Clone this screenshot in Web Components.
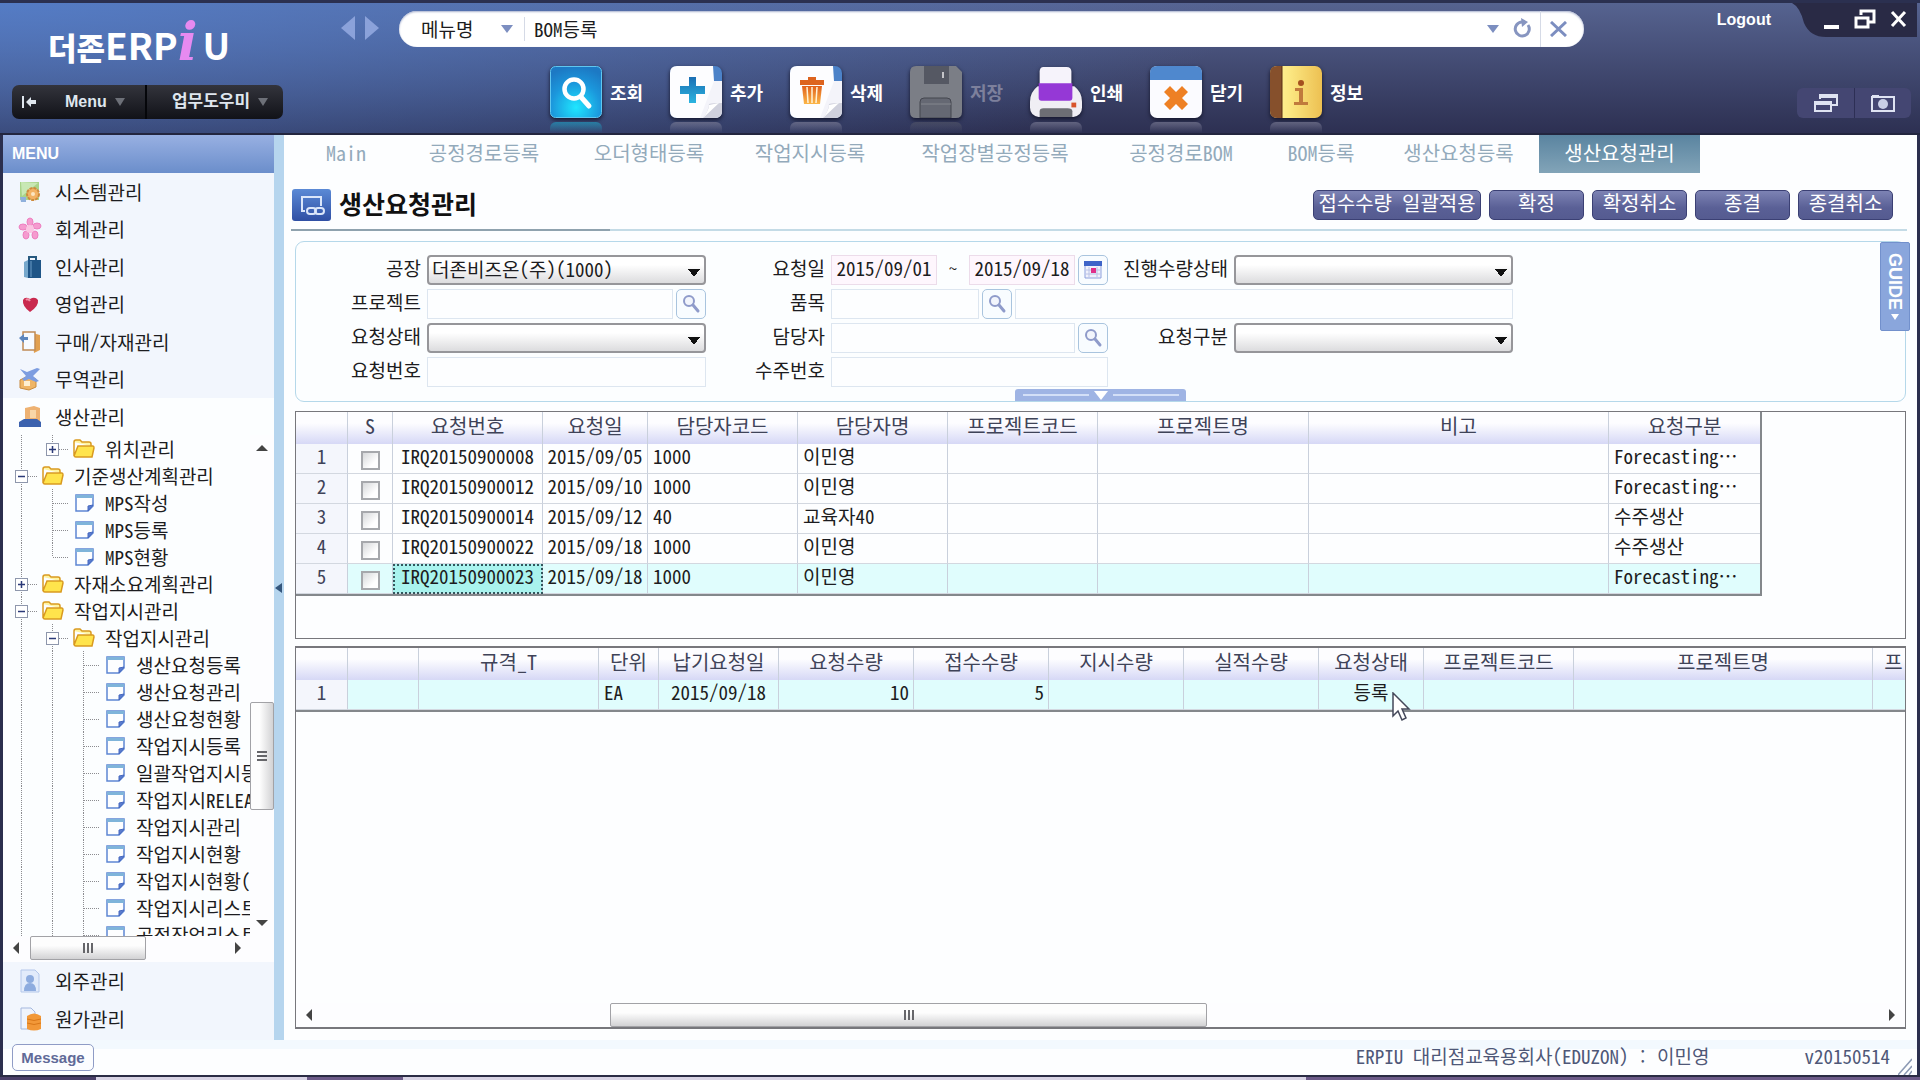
<!DOCTYPE html>
<html lang="ko">
<head>
<meta charset="utf-8">
<title>ERP iU</title>
<style>
  html, body {
    margin: 0;
    height: 100%;
  }

  body {
    --ui: "Noto Sans Mono CJK KR", "Noto Sans CJK KR", sans-serif;
    --bold: "Liberation Sans", "Noto Sans CJK KR", sans-serif;
    font: 19px/24px var(--ui);
    color: #1c1c20;
    background: #2b2f4e;
    overflow: hidden;
  }
</style>
</head>
<body>
<erp-window>
  <app-header slot="header"></app-header>
  <side-menu slot="side"></side-menu>
  <doc-tabs slot="main"></doc-tabs>
  <page-title slot="main" heading="생산요청관리">
    <action-button class="wide">접수수량 일괄적용</action-button>
    <action-button>확정</action-button>
    <action-button>확정취소</action-button>
    <action-button>종결</action-button>
    <action-button>종결취소</action-button>
  </page-title>
  <search-panel slot="main"></search-panel>
  <data-grid slot="main" source="requests"></data-grid>
  <data-grid slot="main" source="items" class="fill"></data-grid>
  <status-bar slot="footer"></status-bar>
</erp-window>

<script>
/**
 * Shared svg drawings
 */
const ICONS = {
  search: `<svg viewBox="0 0 52 52"><defs><radialGradient id="g" cx=".5" cy=".8" r=".8"><stop offset="0" stop-color="#1fe6ff"/><stop offset=".6" stop-color="#1b97dc"/><stop offset="1" stop-color="#1c79c4"/></radialGradient></defs><rect x=".5" y=".5" width="51" height="51" rx="5" fill="url(#g)" stroke="#5fc6f0"/><circle cx="24" cy="23" r="9.500" fill="none" stroke="#fff" stroke-width="4.500"/><path d="M31 31l8 9" stroke="#fff" stroke-width="5" stroke-linecap="round"/></svg>`,
  add: `<svg viewBox="0 0 52 52"><defs><linearGradient id="g" x2="0" y2="1"><stop offset="0" stop-color="#1b6fb4"/><stop offset="1" stop-color="#2bb4e0"/></linearGradient></defs><rect width="52" height="52" rx="7" fill="#4c82c8"/><path d="M7 0h36l1 15v13l8-4v14L36 52H7q-7 0-7-7V7q0-7 7-7z" fill="#fdfdff"/><path d="M44 15h8v30q0 7-7 7H30z" fill="#f4f4fa"/><path d="M33 52q6-8 6-14 4-1 13-1v8q0 7-7 7z" fill="#cfd0dc"/><path d="M33 52q6-8 6-13 5-1 10-2z" fill="#fff"/><path d="M19 11h7v9h9v8h-9v9h-7v-9h-9v-8h9z" fill="url(#g)"/></svg>`,
  remove: `<svg viewBox="0 0 52 52"><defs><linearGradient id="g" x2="0" y2="1"><stop offset="0" stop-color="#e0601c"/><stop offset="1" stop-color="#fbb648"/></linearGradient></defs><rect width="52" height="52" rx="7" fill="#4c82c8"/><path d="M7 0h36l1 15v13l8-4v14L36 52H7q-7 0-7-7V7q0-7 7-7z" fill="#fdfdff"/><path d="M44 15h8v30q0 7-7 7H30z" fill="#f4f4fa"/><path d="M33 52q6-8 6-14 4-1 13-1v8q0 7-7 7z" fill="#cfd0dc"/><path d="M33 52q6-8 6-13 5-1 10-2z" fill="#fff"/><path d="M10 14h8v-3h8v3h8v5H10z" fill="#dd641f"/><path d="M12 20h20l-2 18H14z" fill="url(#g)"/><path d="M17 21l1 16M22 21v16M27 21l-1 16" stroke="#fff3d8" stroke-width="1.500"/></svg>`,
  save: `<svg viewBox="0 0 52 52"><path d="M6 0h40l6 6v40q0 6-6 6H6q-6 0-6-6V6q0-6 6-6z" fill="#7b7e86"/><path d="M14 0h25v18H14z" fill="#555863"/><path d="M33 6v6" stroke="#c4c4c8" stroke-width="2"/><path d="M10 52V36q0-4 4-4h23q4 0 4 4v16z" fill="#656873" stroke="#44464f"/><path d="M11 38h30" stroke="#85878f"/></svg>`,
  print: `<svg viewBox="0 0 54 52"><path d="M14 0h24q5 0 5 5v16H10V5q0-5 4-5z" fill="#f6f3fb"/><path d="M8 20h38q8 6 8 16v6q0 8-9 10H9q-9-2-9-10v-6q0-10 8-16z" fill="#f0eef4"/><path d="M9 17h35v15q0 3-3 3H12q-3 0-3-3z" fill="#9538d6"/><path d="M10 52v-6q0-3 4-3h25q5 0 5 3v6z" fill="#6d6e74"/><path d="M43 37h5v5h-5z" fill="#d8542c"/></svg>`,
  close: `<svg viewBox="0 0 52 52"><rect width="52" height="52" rx="7" fill="#fbfbff"/><path d="M7 0h38q7 0 7 7v7H0V7q0-7 7-7z" fill="#4f88ce"/><path d="M20 20l6 6 6-6 6 6-6 6 6 6-6 6-6-6-6 6-6-6 6-6-6-6z" fill="#ee8024"/></svg>`,
  info: `<svg viewBox="0 0 52 52"><defs><linearGradient id="g" x2="1" y2="0"><stop offset="0" stop-color="#fff7a0"/><stop offset=".4" stop-color="#fbe680"/><stop offset="1" stop-color="#edc052"/></linearGradient></defs><rect width="52" height="52" rx="7" fill="url(#g)"/><path d="M7 0h5v52H7q-7 0-7-7V7q0-7 7-7z" fill="#86502c"/><path d="M12 0v52" stroke="#5b2f14"/><circle cx="31" cy="17" r="3" fill="#a4501f"/><path d="M25 22h8v14h5v3H24v-3h5V25h-4z" fill="#c07a3c"/></svg>`,
  lens: `<svg viewBox="0 0 20 20" width="20" height="20"><circle cx="8" cy="7" r="5" fill="#f2f5fc" stroke="#8f9bca" stroke-width="2"/><path d="M12 11l5 6" stroke="#8f9bca" stroke-width="3" stroke-linecap="round"/></svg>`,
  calendar: `<svg viewBox="0 0 20 20" width="20" height="20"><path d="M2 2h16v16H2z" fill="#f0f1fb" stroke="#8da0dc"/><path d="M1 1h18v5H1z" fill="#3e64c8"/><path d="M6 7v10M14 7v10M3 10h14M3 14h14" stroke="#b9c2e6"/><path d="M8 8h5v5H8z" fill="#e0308a"/></svg>`,
  folder: `<svg viewBox="0 0 22 20" width="22" height="20"><path d="M1 3q0-2 2-2h4l2 2h7q2 0 2 2v2" fill="#fff3a0" stroke="#d99a20" stroke-width="1.500"/><path d="M1 3v14l4-10h15q1 0 1 2l-2 9H3q-2 0-2-2z" fill="#ffe44c" stroke="#d99a20" stroke-width="1.500"/></svg>`,
  doc: `<svg viewBox="0 0 22 20" width="22" height="20"><path d="M3 2h17v11l-5 5H3z" fill="#fdfeff" stroke="#5d86d4" stroke-width="1.500"/><path d="M3 2h17v3H3z" fill="#7fb4da"/><path d="M20 12l-5 6v-5z" fill="#5d7fd0" stroke="#4668c0"/></svg>`,
  system: `<svg viewBox="0 0 24 24"><path d="M2 2h19v18H2z" fill="#a9d48a"/><path d="M2 17h6v5H3z" fill="#8fb0dc"/><path d="M3 2l1 14 16-13z" fill="#c8e8b4"/><circle cx="15" cy="14" r="6" fill="#f2b264" stroke="#cf8a3c" stroke-width="2" stroke-dasharray="3 1"/><circle cx="15" cy="14" r="2" fill="#fbe6c2"/></svg>`,
  account: `<svg viewBox="0 0 24 24"><g fill="#f59bcf" stroke="#ee7fc0"><ellipse cx="12" cy="5" rx="3" ry="4"/><ellipse cx="5" cy="10" rx="4" ry="3"/><ellipse cx="19" cy="9" rx="4" ry="3"/><ellipse cx="8" cy="18" rx="3" ry="4"/><ellipse cx="17" cy="18" rx="3" ry="4"/></g><circle cx="12" cy="12" r="4" fill="#fbc4e2"/></svg>`,
  hr: `<svg viewBox="0 0 24 24"><path d="M11 5V2h7v3" fill="none" stroke="#27597f" stroke-width="2"/><path d="M6 7l4-2v18l-4-1z" fill="#77a8cc"/><path d="M10 5h13v18H10z" fill="#1f5587"/><path d="M13 6v16" stroke="#6c9dc6"/></svg>`,
  sales: `<svg viewBox="0 0 24 24"><path d="M12 20Q4 14 5 8q2-4 7-1 5-3 8 1 1 6-8 12z" fill="#c9294e"/><path d="M8 8q2-2 4 1" stroke="#f08aa0" stroke-width="2" fill="none"/></svg>`,
  buy: `<svg viewBox="0 0 24 24"><path d="M14 3l8 2v15l-6 3z" fill="#e2a050"/><path d="M5 2h12v18H5z" fill="#f7faff" stroke="#c08b55" stroke-width="1.500"/><path d="M1 8l5-4v3h4v3H6v3z" fill="#5d86be"/></svg>`,
  trade: `<svg viewBox="0 0 24 24"><path d="M2 13l6-3 10 2v8l-7 3-9-2z" fill="#efb566" stroke="#c98b3c"/><path d="M6 14h6v5H6z" fill="#fff0d0"/><path d="M2 2l7 3 10-4 3 1-7 7 6 5-3 1-7-3-5 2-2-2 4-3z" fill="#7d9de0"/></svg>`,
  produce: `<svg viewBox="0 0 24 24"><path d="M7 3l9-2 6 2v14H7z" fill="#eeb272"/><path d="M12 5h6v8h-6z" fill="#f9d7a8"/><path d="M1 17l5-3h13l4 3v5H1z" fill="#3c62ae"/></svg>`,
  outsource: `<svg viewBox="0 0 24 24"><path d="M3 1h14l4 4v18H3z" fill="#e2ebfb" stroke="#b4c7ea"/><circle cx="12" cy="10" r="4" fill="#8eacdf"/><path d="M6 22q0-8 6-8t6 8z" fill="#8eacdf"/></svg>`,
  cost: `<svg viewBox="0 0 24 24"><path d="M3 1h10l4 4v17H3z" fill="#eef3fc" stroke="#a5b8de"/><path d="M9 9q7-5 14 0v13q-7 3-14 0z" fill="#f29838"/><path d="M9 12q7 3 14 0M9 16q7 3 14 0" stroke="#d97718" fill="none"/></svg>`
};


/**
 * Base class: opens a shadow root and fills it from render()
 */
class ErpElement extends HTMLElement {

  constructor() {
    super();
    this.attachShadow({ mode: 'open' });
  }

  connectedCallback() {
    this.shadowRoot.innerHTML = this.render();
  }

}


/**
 * `<erp-window>` is the outer frame: header, side menu, main area and status bar
 */
customElements.define('erp-window', class extends ErpElement {

  render() {
    return `
      <style>
      :host {
        display: flex;
        flex-direction: column;
        box-sizing: border-box;
        height: 100vh;
        position: relative;
      }

      .body {
        flex: 1;
        display: flex;
        min-height: 0;
        margin: 0 3px;
        background: #fdfeff;
      }

      .side {
        flex: none;
        width: 271px;
        display: flex;
      }

      .splitter {
        flex: none;
        width: 10px;
        display: flex;
        align-items: center;
        background: #b6d5ee;
      }

      .main {
        flex: 1;
        min-width: 0;
        display: flex;
        flex-direction: column;
        padding-bottom: 11px;
      }

      .taskbar {
        height: 3px;
        background: linear-gradient(90deg, #4a3f68 0 5%, #d8d3e4 5% 16%, #6c5a88 16% 21%, #d8d3e4 21% 68%, #6c5a88 68%);
        border-top: 2px solid #2a2c44;
      }

      .pointer {
        position: absolute;
        left: 1392px;
        top: 692px;
      }
      </style>
      <slot name="header"></slot>
      <div class="body">
        <div class="side"><slot name="side"></slot></div>
        <div class="splitter"><svg width="10" height="12"><path d="M8 1v10L1 6z" fill="#35567c"/></svg></div>
        <div class="main"><slot name="main"></slot></div>
      </div>
      <slot name="footer"></slot>
      <div class="taskbar"></div>
      <svg class="pointer" width="20" height="30"><path d="M1 1v23l5-5 4 9 4-2-4-9h7z" fill="#fff" stroke="#44485a" stroke-width="1.500"/></svg>
    `;
  }

});


/**
 * `<tool-button>` is one big icon of the toolbar, with its reflection below
 */
customElements.define('tool-button', class extends ErpElement {

  render() {
    return `
      <style>
      :host {
        display: block;
        width: 120px;
      }

      button {
        display: grid;
        grid-template-columns: 52px auto;
        column-gap: 8px;
        align-items: center;
        justify-content: start;
        padding: 0;
        border: 0;
        background: none;
        color: #fff;
        font: bold 18px/24px "Noto Sans CJK KR", sans-serif;
      }

      button:disabled {
        color: #7d809c;
      }

      svg {
        display: block;
        width: 52px;
        height: 52px;
        filter: drop-shadow(0 2px 2px #14162c);
      }

      i {
        height: 11px;
        margin-top: 4px;
        border-radius: 6px 6px 0 0;
        background: linear-gradient(var(--glow, #84849c), transparent);
        opacity: .6;
      }
      </style>
      <button ${this.hasAttribute('disabled') ? 'disabled' : ''}>
        ${ICONS[this.getAttribute('icon')]}
        <slot></slot>
        <i></i>
      </button>
    `;
  }

});


/**
 * `<app-header>` holds the logo, the address bar, the toolbar and the window controls
 */
customElements.define('app-header', class extends ErpElement {

  render() {
    return `
      <style>
      :host {
        display: grid;
        grid-template-columns: 338px 1fr;
        flex: none;
        box-sizing: border-box;
        height: 135px;
        padding: 0 3px;
        border-top: 3px solid #2b3050;
        border-bottom: 2px solid #23263f;
        background:
          radial-gradient(ellipse 65% 170% at 0 0, rgba(84, 128, 206, .85), rgba(84, 128, 206, 0)),
          linear-gradient(#566390, #2d3052);
      }

      button {
        font: inherit;
        color: inherit;
        border: 0;
        padding: 0;
        background: none;
        display: flex;
        align-items: center;
        justify-content: center;
      }

      .brand {
        display: flex;
        flex-direction: column;
        justify-content: space-between;
        padding: 11px 0 14px 9px;
      }

      .logo {
        display: flex;
        align-items: baseline;
        padding-left: 36px;
        height: 56px;
        color: #fff;
        font: bold 37px/56px "Noto Sans CJK KR", sans-serif;
      }

      .logo b {
        font-size: 31px;
      }

      .logo em {
        font: italic bold 52px/56px "DejaVu Serif", serif;
        color: #e68af0;
        padding-right: 5px;
      }

      nav {
        display: flex;
        align-self: flex-start;
        height: 34px;
        border-radius: 7px;
        background: linear-gradient(#33343c, #111218);
        color: #dfe6ee;
        font: bold 16px/24px var(--bold);
      }

      nav button {
        gap: 8px;
      }

      nav .menu {
        width: 135px;
        padding-left: 4px;
        justify-content: flex-start;
        border-right: 2px solid #05060a;
        box-sizing: border-box;
      }

      nav .menu svg:first-child {
        margin: 0 20px 0 5px;
      }

      nav .help {
        width: 136px;
        padding-left: 10px;
        font-size: 17px;
      }

      .right {
        display: flex;
        flex-direction: column;
        justify-content: space-between;
      }

      .top {
        display: flex;
        align-items: flex-start;
      }

      .history {
        display: flex;
        gap: 10px;
        padding-top: 13px;
        margin-right: 20px;
      }

      .address {
        flex: 1;
        display: flex;
        align-items: center;
        height: 36px;
        box-sizing: border-box;
        margin: 8px 133px 0 0;
        padding: 0 17px 0 16px;
        border-radius: 18px;
        background: #fff;
        box-shadow: inset 0 1px 2px #a9b2cf;
      }

      .address select, .address input {
        font: 19px/24px var(--ui);
        border: 0;
        padding: 0;
        background: none;
        appearance: none;
        color: #1c1c20;
      }

      .address select {
        width: 86px;
        padding-left: 6px;
      }

      .address input {
        flex: 1;
        min-width: 0;
        margin-left: 11px;
        padding-left: 9px;
        border-left: 1px solid #d5dae6;
      }

      .address .stop {
        margin-left: 7px;
        padding-left: 9px;
        height: 36px;
        border-left: 1px solid #d5dae6;
      }

      .address .reload {
        margin-left: 14px;
      }

      .logout {
        margin: 5px 21px 0 0;
        color: #fff;
        font: bold 16px/24px var(--bold);
        text-decoration: none;
      }

      .controls {
        display: flex;
        gap: 14px;
        width: 125px;
        height: 34px;
        box-sizing: border-box;
        padding: 0 8px 3px 30px;
        background: #292a45;
        clip-path: path("M0 0h125v34H34Q18 34 12 20Q8 4 0 0z");
      }

      .bottom {
        display: flex;
        justify-content: space-between;
        align-items: flex-start;
        padding-left: 209px;
      }

      .tools {
        display: flex;
      }

      .view {
        display: flex;
        margin: 22px 6px 0 0;
        border-radius: 6px;
        background: #444672;
        color: #fff;
      }

      .view button {
        width: 57px;
        height: 30px;
      }

      .view button + button {
        border-left: 1px solid #2d2f55;
      }
      </style>
      <div class="brand">
        <div class="logo"><b>더존</b>ERP<em>i</em>U</div>
        <nav>
          <button class="menu">
            <svg width="16" height="16"><path d="M2 2v12" stroke="#dfe6ee" stroke-width="2"/><path d="M5 8l5-5v3h5v4h-5v3z" fill="#dfe6ee"/></svg>
            Menu
            <svg width="10" height="8"><path d="M0 0h10L5 8z" fill="#6d7078"/></svg>
          </button>
          <button class="help">업무도우미 <svg width="10" height="8"><path d="M0 0h10L5 8z" fill="#6d7078"/></svg></button>
        </nav>
      </div>
      <div class="right">
        <div class="top">
          <div class="history">
            <button aria-label="Back"><svg width="14" height="24"><path d="M14 0v24L0 12z" fill="#8ba2da"/></svg></button>
            <button aria-label="Forward"><svg width="14" height="24"><path d="M0 0v24l14-12z" fill="#8ba2da"/></svg></button>
          </div>
          <div class="address">
            <select aria-label="Search by"><option>메뉴명</option></select>
            <svg width="12" height="8"><path d="M0 0h12L6 8z" fill="#7c8ec0"/></svg>
            <input aria-label="Menu search" value="BOM등록">
            <svg width="12" height="8"><path d="M0 0h12L6 8z" fill="#7c8ec0"/></svg>
            <button class="reload" aria-label="Reload"><svg width="20" height="22"><path d="M15 7a7 7 0 1 1-6-3" fill="none" stroke="#8795c0" stroke-width="3"/><path d="M8 0l7 4-6 5z" fill="#8795c0"/></svg></button>
            <button class="stop" aria-label="Stop"><svg width="17" height="16"><path d="M1 1l15 14M16 1L1 15" stroke="#7c8ec0" stroke-width="3"/></svg></button>
          </div>
          <a class="logout" href="#">Logout</a>
          <div class="controls">
            <button aria-label="Minimize"><svg width="18" height="22"><path d="M2 19h15" stroke="#fff" stroke-width="4"/></svg></button>
            <button aria-label="Restore"><svg width="22" height="20"><path d="M7 6V2h13v11h-5" fill="none" stroke="#fff" stroke-width="3"/><path d="M2 9h12v9H2z" fill="none" stroke="#fff" stroke-width="3"/></svg></button>
            <button aria-label="Close"><svg width="17" height="18"><path d="M2 2l13 14M15 2L2 16" stroke="#fff" stroke-width="3"/></svg></button>
          </div>
        </div>
        <div class="bottom">
          <div class="tools">
            <tool-button icon="search" style="--glow: #1fa5c8">조회</tool-button>
            <tool-button icon="add">추가</tool-button>
            <tool-button icon="remove">삭제</tool-button>
            <tool-button icon="save" style="--glow: #55586a" disabled>저장</tool-button>
            <tool-button icon="print">인쇄</tool-button>
            <tool-button icon="close">닫기</tool-button>
            <tool-button icon="info">정보</tool-button>
          </div>
          <div class="view">
            <button aria-label="Windows"><svg width="26" height="20"><path d="M7 6V2h17v10h-5M7 4h17" fill="none" stroke="#dfe3f2" stroke-width="2"/><path d="M2 9h16v9H2zM2 11h16" fill="none" stroke="#dfe3f2" stroke-width="2"/></svg></button>
            <button aria-label="Capture"><svg width="24" height="18"><path d="M1 3h22v14H1zM1 2h7" fill="none" stroke="#dfe3f2" stroke-width="2"/><circle cx="12" cy="10" r="5" fill="#c9cfe6"/></svg></button>
          </div>
        </div>
      </div>
    `;
  }

});


/**
 * `<scroll-bar>` places its thumb with before / size / after shares
 */
customElements.define('scroll-bar', class extends ErpElement {

  render() {
    const vertical = this.hasAttribute('vertical');
    const [before, size, after] = this.getAttribute('range').split(' ');
    const arrows = vertical
      ? ['M6 0l6 6H0z', 'M0 0h12L6 6z']
      : ['M6 0v12L0 6z', 'M0 0v12l6-6z'];

    return `
      <style>
      :host {
        display: flex;
        flex: none;
        flex-direction: ${vertical ? 'column' : 'row'};
        ${vertical ? 'width: 24px' : 'height: 24px'};
        background: #fdfdff;
      }

      .arrow {
        flex: none;
        width: ${vertical ? 'auto' : '26px'};
        height: ${vertical ? '26px' : 'auto'};
        display: flex;
        align-items: center;
        justify-content: center;
      }

      .thumb {
        flex: ${size} 0 0;
        display: flex;
        align-items: center;
        justify-content: center;
        box-sizing: border-box;
        border: 1px solid #a2a2a6;
        border-radius: 2px;
        background: linear-gradient(${vertical ? '90deg' : '180deg'}, #fdfdfd 40%, #d2d2d4);
      }

      .thumb svg {
        transform: rotate(${vertical ? 90 : 0}deg);
      }
      </style>
      <div class="arrow"><svg width="12" height="12"><path d="${arrows[0]}" transform="translate(${vertical ? '0 3' : '3 0'})" fill="#444"/></svg></div>
      <div style="flex: ${before} 0 0"></div>
      <div class="thumb"><svg width="12" height="10"><path d="M2 0v10M6 0v10M10 0v10" stroke="#66666a" stroke-width="2"/></svg></div>
      <div style="flex: ${after} 0 0"></div>
      <div class="arrow"><svg width="12" height="12"><path d="${arrows[1]}" transform="translate(${vertical ? '0 3' : '3 0'})" fill="#444"/></svg></div>
    `;
  }

});


/**
 * `<menu-item>` is one module of the side menu
 */
customElements.define('menu-item', class extends ErpElement {

  render() {
    return `
      <style>
      :host {
        display: flex;
        flex: none;
        height: 37px;
        background: #f2f6fd;
      }

      :host([active]) {
        background: #fcfeff;
      }

      a {
        flex: 1;
        display: flex;
        align-items: center;
        gap: 13px;
        padding-left: 15px;
        color: inherit;
        text-decoration: none;
      }

      svg {
        width: 24px;
        height: 24px;
      }
      </style>
      <a href="#">${ICONS[this.getAttribute('icon')]}<slot></slot></a>
    `;
  }

});


/**
 * `<tree-node>` draws its guides from one character per level:
 * | line, + closed, - open, t branch, L last branch, P closed last node
 */
customElements.define('tree-node', class extends ErpElement {

  guide(kind) {
    const box = '+-P'.includes(kind);
    const half = kind === 'L' || kind === 'P';

    return `
      <svg width="31" height="27">
        <path d="M15.500 0V${half ? 14 : 27}${kind === '|' ? '' : 'M16 14.500H34'}" stroke="#8c8c90" stroke-dasharray="1 1" fill="none"/>
        ${box ? `<rect x="9.500" y="8.500" width="12" height="12" fill="#fff" stroke="#8e97ac"/><path d="M12 14.500h7${kind === '-' ? '' : 'M15.500 11v7'}" stroke="#2b3a78" stroke-width="1.500"/>` : ''}
      </svg>
    `;
  }

  render() {
    const guides = this.getAttribute('guides');

    return `
      <style>
      :host {
        display: flex;
        align-items: center;
        height: 27px;
        white-space: nowrap;
      }

      svg {
        flex: none;
        display: block;
      }

      a {
        display: flex;
        align-items: center;
        gap: 10px;
        padding-left: 5px;
        color: inherit;
        text-decoration: none;
      }
      </style>
      ${[...guides].map(kind => this.guide(kind)).join('')}
      <a href="#">${ICONS[this.getAttribute('icon')]}<slot></slot></a>
    `;
  }

});


/**
 * `<side-menu>` lists the modules, with the tree of the open one between them
 */
customElements.define('side-menu', class extends ErpElement {

  get nodes() {
    return [
      ['|P', 'folder', '위치관리'],
      ['-', 'folder', '기준생산계획관리'],
      ['|t', 'doc', 'MPS작성'],
      ['|t', 'doc', 'MPS등록'],
      ['|L', 'doc', 'MPS현황'],
      ['+', 'folder', '자재소요계획관리'],
      ['-', 'folder', '작업지시관리'],
      ['|-', 'folder', '작업지시관리'],
      ['||t', 'doc', '생산요청등록'],
      ['||t', 'doc', '생산요청관리'],
      ['||t', 'doc', '생산요청현황'],
      ['||t', 'doc', '작업지시등록'],
      ['||t', 'doc', '일괄작업지시등록'],
      ['||t', 'doc', '작업지시RELEASE'],
      ['||t', 'doc', '작업지시관리'],
      ['||t', 'doc', '작업지시현황'],
      ['||t', 'doc', '작업지시현황(상세)'],
      ['||t', 'doc', '작업지시리스트'],
      ['||t', 'doc', '공정작업리스트']
    ];
  }

  render() {
    return `
      <style>
      :host {
        flex: 1;
        min-width: 0;
        display: flex;
        flex-direction: column;
        padding-bottom: 3px;
        background: #f2f6fd;
      }

      h2 {
        flex: none;
        margin: 0;
        padding-left: 9px;
        color: #fff;
        font: bold 16px/38px var(--bold);
        background: linear-gradient(#98b0e2, #6b8ecb);
      }

      menu-item:nth-of-type(even) {
        height: 38px;
      }

      .open {
        flex: 1;
        min-height: 0;
        display: flex;
        background: #fcfeff;
      }

      .tree {
        flex: 1;
        min-width: 0;
        overflow: hidden;
        padding-left: 3px;
      }

      scroll-bar:not([vertical]) {
        margin-right: 23px;
      }

      .across {
        background: #fdfdff;
        flex: none;
        padding-bottom: 2px;
      }
      </style>
      <h2>MENU</h2>
      <menu-item icon="system">시스템관리</menu-item>
      <menu-item icon="account">회계관리</menu-item>
      <menu-item icon="hr">인사관리</menu-item>
      <menu-item icon="sales">영업관리</menu-item>
      <menu-item icon="buy">구매/자재관리</menu-item>
      <menu-item icon="trade">무역관리</menu-item>
      <menu-item icon="produce" active>생산관리</menu-item>
      <div class="open">
        <div class="tree">
          ${this.nodes.map(([guides, icon, label]) => `<tree-node guides="${guides}" icon="${icon}">${label}</tree-node>`).join('')}
        </div>
        <scroll-bar vertical range="243 106 101"></scroll-bar>
      </div>
      <div class="across"><scroll-bar range="1 115 80"></scroll-bar></div>
      <menu-item icon="outsource">외주관리</menu-item>
      <menu-item icon="cost">원가관리</menu-item>
    `;
  }

});


/**
 * `<doc-tabs>` is the row of opened screens
 */
customElements.define('doc-tabs', class extends ErpElement {

  render() {
    const tabs = ['Main', '공정경로등록', '오더형태등록', '작업지시등록', '작업장별공정등록', '공정경로BOM', 'BOM등록', '생산요청등록', '생산요청관리'];

    return `
      <style>
      :host {
        flex: none;
        display: grid;
        grid-template-columns: 104px 172px 158px 164px 206px 166px 114px 161px 161px;
        padding-left: 10px;
        font-size: 20px;
        line-height: 36px;
        text-align: center;
      }

      a {
        padding-bottom: 2px;
        color: #93aabb;
        text-decoration: none;
      }

      a:last-child {
        color: #fff;
        background: linear-gradient(#5a84a0, #82a4b8);
      }
      </style>
      ${tabs.map(tab => `<a href="#">${tab}</a>`).join('')}
    `;
  }

});


/**
 * `<action-button>` is a violet command button
 */
customElements.define('action-button', class extends ErpElement {

  render() {
    return `
      <style>
      :host {
        display: block;
        width: 95px;
      }

      :host(.wide) {
        width: 168px;
      }

      button {
        width: 100%;
        height: 30px;
        padding: 0 0 3px;
        border: 1px solid #3b4074;
        border-radius: 5px;
        background: linear-gradient(#7d83b4, #5a6096 60%, #555b90);
        color: #fff;
        font: 20px/24px var(--ui);
        white-space: nowrap;
      }
      </style>
      <button><slot></slot></button>
    `;
  }

});


/**
 * `<page-title>` shows the screen's name, and its commands in the slot
 */
customElements.define('page-title', class extends ErpElement {

  render() {
    return `
      <style>
      :host {
        flex: none;
        display: flex;
        align-items: center;
        gap: 8px;
        box-sizing: border-box;
        height: 58px;
        margin: 0 10px 0 7px;
        padding: 7px 14px 0 1px;
        border-bottom: 2px solid;
        border-image: linear-gradient(90deg, #8fa2ae 320px, #c4dbe6 320px) 1;
      }

      h1 {
        flex: 1;
        margin: 0;
        padding-bottom: 4px;
        font: bold 25px/32px var(--ui);
        color: #111;
      }
      </style>
      <svg width="39" height="32"><defs><linearGradient id="g" x2="0" y2="1"><stop offset="0" stop-color="#5b8ad6"/><stop offset="1" stop-color="#2f4fa4"/></linearGradient></defs><rect width="39" height="32" rx="3" fill="url(#g)"/><path d="M10 22V8h19v9M9 22h4" fill="none" stroke="#dbe6fa" stroke-width="2"/><rect x="15" y="19" width="9" height="6" rx="3" fill="none" stroke="#dbe6fa" stroke-width="2"/><rect x="23" y="19" width="9" height="6" rx="3" fill="none" stroke="#dbe6fa" stroke-width="2"/></svg>
      <h1>${this.getAttribute('heading')}</h1>
      <slot></slot>
    `;
  }

});


/**
 * `<search-panel>` is the form with the query conditions
 */
customElements.define('search-panel', class extends ErpElement {

  render() {
    return `
      <style>
      :host {
        flex: none;
        display: block;
        position: relative;
        margin: 10px 11px 9px 11px;
        border: 1px solid #b5d8ea;
        border-radius: 9px;
        background: #fcfeff;
      }

      form {
        display: grid;
        grid-template-columns: 125px 279px 113px 277px 114px 279px;
        grid-auto-rows: 30px;
        gap: 4px 6px;
        padding: 13px 0 14px;
      }

      label {
        text-align: right;
        line-height: 26px;
        white-space: nowrap;
      }

      .field {
        display: flex;
        gap: 3px;
      }

      .long {
        grid-column: span 3;
      }

      input, select {
        flex: 1;
        min-width: 0;
        box-sizing: border-box;
        height: 30px;
        margin: 0;
        padding: 0 5px 3px;
        border: 1px solid #dde6f0;
        background: #fdfeff;
        color: #1c1c20;
        font: 19px/24px var(--ui);
      }

      select {
        appearance: none;
        border: 2px solid #96969a;
        border-radius: 4px;
        background:
          linear-gradient(to bottom right, #111 50%, transparent 50%) calc(100% - 4px) 12px / 6px 8px no-repeat,
          linear-gradient(to bottom left, #111 50%, transparent 50%) calc(100% - 10px) 12px / 6px 8px no-repeat,
          linear-gradient(#fff 30%, #dcdcde);
        padding: 0 3px 4px;
      }

      input.date {
        flex: none;
        width: 106px;
        padding: 0 0 6px;
        text-align: center;
        border-color: #ecdcea;
        background: #fef6fd;
      }

      input.short {
        flex: none;
        width: 148px;
      }

      button {
        flex: none;
        width: 30px;
        height: 30px;
        box-sizing: border-box;
        display: flex;
        align-items: center;
        justify-content: center;
        padding: 0;
        border: 1px solid #a9c4de;
        border-radius: 5px;
        background: #f8fcff;
      }

      .tilde {
        flex: 1;
        text-align: center;
        line-height: 26px;
        font-size: 16px;
      }

      .guide {
        position: absolute;
        top: 0;
        right: -5px;
        width: 30px;
        height: 89px;
        gap: 4px;
        border: 1px solid #7290cc;
        background: #8aa6dc;
        border-radius: 2px;
        color: #fff;
        font: bold 18px/24px var(--bold);
        writing-mode: vertical-rl;
      }

      .fold {
        position: absolute;
        left: 719px;
        bottom: 0;
        width: 171px;
        height: 12px;
        border: 0;
        border-radius: 3px 3px 0 0;
        background: #9fb4e4;
      }
      </style>
      <form>
        <label for="plant">공장</label>
        <div class="field"><select id="plant"><option>더존비즈온(주)(1000)</option></select></div>
        <label for="from">요청일</label>
        <div class="field">
          <input id="from" class="date" value="2015/09/01">
          <span class="tilde">~</span>
          <input class="date" aria-label="요청일 까지" value="2015/09/18">
          <button type="button" aria-label="Calendar">${ICONS.calendar}</button>
        </div>
        <label for="progress">진행수량상태</label>
        <div class="field"><select id="progress"></select></div>

        <label for="project">프로젝트</label>
        <div class="field"><input id="project"><button type="button" aria-label="Find project">${ICONS.lens}</button></div>
        <label for="item">품목</label>
        <div class="field long"><input id="item" class="short"><button type="button" aria-label="Find item">${ICONS.lens}</button><input aria-label="Item name"></div>

        <label for="state">요청상태</label>
        <div class="field"><select id="state"></select></div>
        <label for="person">담당자</label>
        <div class="field"><input id="person"><button type="button" aria-label="Find person">${ICONS.lens}</button></div>
        <label for="kind">요청구분</label>
        <div class="field"><select id="kind"></select></div>

        <label for="number">요청번호</label>
        <div class="field"><input id="number"></div>
        <label for="order">수주번호</label>
        <div class="field"><input id="order"></div>
      </form>
      <button class="guide">GUIDE <svg width="8" height="6"><path d="M0 0h8L4 6z" fill="#fff"/></svg></button>
      <button class="fold" aria-label="Fold"><svg width="156" height="12"><path d="M0 6h66M90 6h66" stroke="#d3dff7" stroke-width="2"/><path d="M71 2h14l-7 9z" fill="#fff"/></svg></button>
    `;
  }

});


/**
 * Columns are [title, width, alignment of the cells]
 */
const SOURCES = {
  requests: {
    columns: [['', 52, 'center'], ['S', 45, 'check'], ['요청번호', 150, 'center'], ['요청일', 105, 'center'], ['담당자코드', 150], ['담당자명', 150], ['프로젝트코드', 150], ['프로젝트명', 211], ['비고', 300], ['요청구분', 151]],
    rows: [
      ['1', false, 'IRQ20150900008', '2015/09/05', '1000', '이민영', '', '', '', 'Forecasting…'],
      ['2', false, 'IRQ20150900012', '2015/09/10', '1000', '이민영', '', '', '', 'Forecasting…'],
      ['3', false, 'IRQ20150900014', '2015/09/12', '40', '교육자40', '', '', '', '수주생산'],
      ['4', false, 'IRQ20150900022', '2015/09/18', '1000', '이민영', '', '', '', '수주생산'],
      ['5', false, 'IRQ20150900023', '2015/09/18', '1000', '이민영', '', '', '', 'Forecasting…']
    ],
    selected: 4,
    focus: 2
  },
  items: {
    columns: [['', 52, 'center'], ['', 71], ['규격_T', 180], ['단위', 60], ['납기요청일', 120, 'center'], ['요청수량', 135, 'right'], ['접수수량', 135, 'right'], ['지시수량', 135, 'right'], ['실적수량', 135, 'right'], ['요청상태', 105, 'center'], ['프로젝트코드', 150], ['프로젝트명', 299], ['프', 41]],
    rows: [
      ['1', '', '', 'EA', '2015/09/18', '10', '5', '', '', '등록', '', '', '']
    ],
    selected: 0,
    scroll: '288 596 672'
  }
};


/**
 * `<data-grid>` renders the source that its attribute names
 */
customElements.define('data-grid', class extends ErpElement {

  cell(value, align, focused) {
    const content = value === false ? '<input type="checkbox" aria-label="Select">' : value;

    return `<td class="${align || 'left'}${focused ? ' focus' : ''}">${content}</td>`;
  }

  render() {
    const { columns, rows, selected, focus, scroll } = SOURCES[this.getAttribute('source')];
    const width = columns.reduce((sum, column) => sum + column[1], 0);

    return `
      <style>
      :host {
        flex: none;
        display: flex;
        flex-direction: column;
        box-sizing: border-box;
        margin: 0 11px;
        border: 1px solid #77777c;
        background: #fdfeff;
        min-height: 228px;
      }

      :host(.fill) {
        flex: 1;
        margin-top: 7px;
        border-width: 2px 1px;
      }

      .scroller {
        flex: 1;
        overflow: hidden;
      }

      table {
        table-layout: fixed;
        border-spacing: 0;
        width: ${width}px;
        border-bottom: 2px solid #84888c;
        border-right: ${scroll ? 0 : 2}px solid #84888c;
      }

      th, td {
        box-sizing: border-box;
        height: 30px;
        padding: 0 4px 5px 5px;
        border-right: 1px solid #c9d0dc;
        border-bottom: 1px solid #d3d8e0;
        white-space: nowrap;
        line-height: 24px;
      }

      th {
        height: 32px;
        padding: 0 0 4px;
        font-size: 20px;
        font-weight: normal;
        color: #3f4358;
        border-bottom: 0;
        background: linear-gradient(#fdfdff 35%, #d6d8f6);
      }

      tr > :last-child {
        border-right: 0;
      }

      .left { text-align: left; }
      .center { text-align: center; padding-left: 4px; }
      .right { text-align: right; }
      .check { padding: 0; }

      td:first-child {
        background: #f4f6fc;
        color: #3f4358;
      }

      .selected td:not(:first-child) {
        background: #e0fdfd;
      }

      .selected td.focus {
        background: #a9f3ee;
        outline: 2px dotted #33555c;
        outline-offset: -2px;
      }

      input {
        appearance: none;
        display: block;
        width: 19px;
        height: 19px;
        margin: 4px auto 0;
        border: 2px solid #a6a8ac;
        background: linear-gradient(135deg, #d6d8da, #fff 70%);
      }
      </style>
      <div class="scroller">
        <table>
          <colgroup>${columns.map(([, size]) => `<col style="width: ${size}px">`).join('')}</colgroup>
          <thead><tr>${columns.map(([title]) => `<th>${title}</th>`).join('')}</tr></thead>
          <tbody>
            ${rows.map((row, i) => `<tr class="${i === selected ? 'selected' : ''}">${row.map((value, j) => this.cell(value, columns[j][2], i === selected && j === focus)).join('')}</tr>`).join('')}
          </tbody>
        </table>
      </div>
      ${scroll ? `<scroll-bar range="${scroll}"></scroll-bar>` : ''}
    `;
  }

});


/**
 * `<status-bar>` closes the window at the bottom
 */
customElements.define('status-bar', class extends ErpElement {

  render() {
    return `
      <style>
      :host {
        flex: none;
        display: flex;
        align-items: center;
        height: 35px;
        margin: 0 3px;
        padding: 0 5px 0 9px;
        background: linear-gradient(#f3f9fe 25%, #fdfeff 25%);
        color: #4f5878;
      }

      button {
        height: 27px;
        width: 82px;
        padding: 0;
        border: 1px solid #8f9cc6;
        border-radius: 5px;
        background: #fcfdff;
        color: #606a98;
        font: bold 15px/24px var(--bold);
      }

      span {
        padding-bottom: 4px;
      }

      .user {
        margin: 0 95px 0 auto;
      }

      svg {
        align-self: flex-end;
        margin-left: 8px;
      }
      </style>
      <button>Message</button>
      <span class="user">ERPIU 대리점교육용회사(EDUZON) : 이민영</span>
      <span>v20150514</span>
      <svg width="14" height="18"><path d="M0 18L14 2M6 18l8-9M11 18l3-4" stroke="#8c9ab4" stroke-width="1.500"/></svg>
    `;
  }

});
</script>
</body>
</html>
